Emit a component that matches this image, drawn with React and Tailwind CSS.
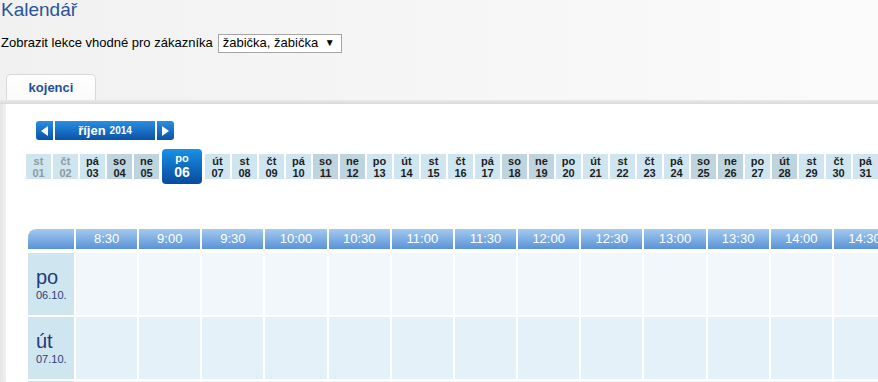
const DAY_NAMES = ["po", "út", "st", "čt", "pá", "so", "ne"];

const days = Array.from({ length: 31 }, (_, i) => {
  const d = i + 1;
  const name = DAY_NAMES[(i + 2) % 7];
  return {
    d,
    name,
    num: String(d).padStart(2, "0"),
    dark: name === "so" || name === "ne" || d === 28,
    past: d < 3,
    selected: d === 6,
  };
});

const times = [];
for (let m = 8 * 60 + 30; m <= 15 * 60; m += 30) {
  times.push(`${Math.floor(m / 60)}:${m % 60 === 0 ? "00" : "30"}`);
}

// third row only peeks in at the bottom edge, its label is below the fold
const rows = [
  { key: "r1", name: "po", date: "06.10.", bg: "bg-[#f1f7fa]" },
  { key: "r2", name: "út", date: "07.10.", bg: "bg-[#e5f1f8]" },
  { key: "r3", name: "", date: "", bg: "bg-[#f1f7fa]" },
];

function DayCell({ day }) {
  if (day.selected) {
    return (
      <div className="mx-[1px] flex h-[35px] w-[40px] shrink-0 flex-col items-center justify-center rounded-[4px] bg-gradient-to-b from-[#1891e8] to-[#0a4a9b] font-bold text-white">
        <span className="text-[11px] leading-[12px]">{day.name}</span>
        <span className="text-[14px] leading-[17px]">{day.num}</span>
      </div>
    );
  }
  const bg = day.dark ? "bg-[#bed4de]" : "bg-[#cfe5f0]";
  const color = day.past ? "text-[#8e9aa0]" : "text-[#1e1e1e]";
  return (
    <div className={`flex h-[25px] w-[25px] shrink-0 flex-col items-center justify-center text-[11px] font-bold leading-[12px] ${bg} ${color}`}>
      <span>{day.name}</span>
      <span>{day.num}</span>
    </div>
  );
}

export default function App() {
  return (
    <div className="h-screen w-[878px] overflow-hidden bg-gradient-to-r from-[#f1f1f1] to-[#fbfbfb] font-['Liberation_Sans',Arial,sans-serif] text-black">
      <h1 className="pl-[1px] text-[19px] leading-[20px] text-[#2a5597]">Kalendář</h1>

      <div className="mt-[14px] flex h-[18px] items-center pl-[1px] text-[13px] leading-[18px]">
        <span>Zobrazit lekce vhodné pro zákazníka</span>
        <div className="ml-[5px] flex h-[19px] w-[124px] items-center justify-between border border-[#a5a5a5] bg-white pl-[4px] pr-[6px]">
          <span>žabička, žabička</span>
          <span className="text-[10px]">▼</span>
        </div>
      </div>

      {/* tab */}
      <div className="mt-[22px] flex">
        <div className="ml-[6px] flex h-[26px] w-[90px] items-center justify-center rounded-t-[5px] border border-b-0 border-[#d9d9d9] bg-gradient-to-b from-white to-[#fafafa] text-[13px] font-bold text-[#1f4f96]">
          kojenci
        </div>
      </div>
      <div className="h-[4px] bg-gradient-to-b from-[#eaeaea] to-[#d9d9d9]" />

      {/* panel */}
      <div className="flex h-full">
        <div className="w-[6px] shrink-0 bg-gradient-to-r from-[#e6e6e6] to-[#f1f1f1]" />
        <div className="flex-1 bg-white">
          <div className="ml-[30px] mt-[17px] flex h-[19px] gap-[2px]">
            <div className="flex w-[17px] items-center justify-center rounded-l-[3px] bg-gradient-to-b from-[#2a8fe2] to-[#0b52a8]">
              <svg width="7" height="10" viewBox="0 0 7 10"><polygon points="7,0 7,10 0,5" fill="white" /></svg>
            </div>
            <div className="flex w-[100px] items-center justify-center bg-gradient-to-b from-[#2a8fe2] to-[#0b52a8] font-bold text-white">
              <span className="text-[13px]">říjen</span>
              <span className="ml-[4px] text-[10px]">2014</span>
            </div>
            <div className="flex w-[17px] items-center justify-center rounded-r-[3px] bg-gradient-to-b from-[#2a8fe2] to-[#0b52a8]">
              <svg width="7" height="10" viewBox="0 0 7 10"><polygon points="0,0 7,5 0,10" fill="white" /></svg>
            </div>
          </div>

          <div className="ml-[20px] mt-[9px] flex h-[35px] items-center gap-[2px]">
            {days.map((day) => (
              <DayCell key={day.d} day={day} />
            ))}
          </div>

          <div className="ml-[22px] mt-[45px] grid grid-cols-[46px_repeat(14,61.17px)] gap-x-[2px]">
            <div className="h-[20px] rounded-tl-[8px] bg-gradient-to-b from-[#a4c9ee] to-[#5893d8]" />
            {times.map((t) => (
              <div key={t} className="flex h-[20px] items-center justify-center bg-gradient-to-b from-[#a4c9ee] to-[#5893d8] text-[13px] text-white">
                {t}
              </div>
            ))}
            <div className="col-span-full h-[4px]" />
            {rows.map((r) => (
              <div key={r.key} className="contents">
                <div className="mb-[2px] flex h-[62px] flex-col justify-center bg-[#cfe5f0] pl-[8px] text-[#1e3c7a]">
                  {r.name && <span className="text-[20px] leading-[20px]">{r.name}</span>}
                  {r.date && <span className="mt-[2px] text-[11px] leading-[12px] text-[#2b3f78]">{r.date}</span>}
                </div>
                {times.map((t) => (
                  <div key={t} className={`mb-[2px] h-[62px] ${r.bg}`} />
                ))}
              </div>
            ))}
          </div>
        </div>
      </div>
    </div>
  );
}
